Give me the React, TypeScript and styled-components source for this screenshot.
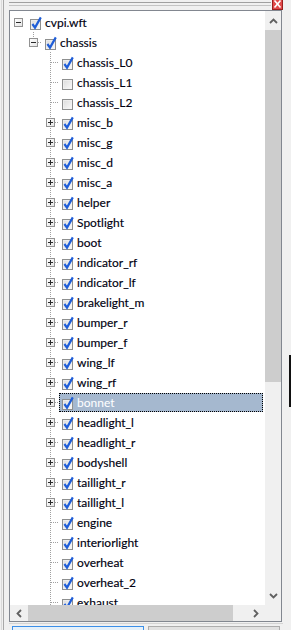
import React from "react";
import styled, { createGlobalStyle, css } from "styled-components";

const GlobalStyle = createGlobalStyle`
  html, body {
    margin: 0;
    padding: 0;
    background: #f0f0f0;
  }
  body {
    font-family: Lato, "Liberation Sans", sans-serif;
  }
`;

type Level = 0 | 1 | 2;

type TreeNode = {
  label: string;
  level: Level;
  expander?: "plus" | "minus";
  checked: boolean;
  selected?: boolean;
};

const leaf = (label: string, checked = true): TreeNode => ({ label, level: 2, checked });
const branch = (label: string, selected = false): TreeNode => ({
  label,
  level: 2,
  expander: "plus",
  checked: true,
  selected,
});

const nodes: TreeNode[] = [
  { label: "cvpi.wft", level: 0, expander: "minus", checked: true },
  { label: "chassis", level: 1, expander: "minus", checked: true },
  leaf("chassis_L0"),
  leaf("chassis_L1", false),
  leaf("chassis_L2", false),
  branch("misc_b"),
  branch("misc_g"),
  branch("misc_d"),
  branch("misc_a"),
  branch("helper"),
  branch("Spotlight"),
  branch("boot"),
  branch("indicator_rf"),
  branch("indicator_lf"),
  branch("brakelight_m"),
  branch("bumper_r"),
  branch("bumper_f"),
  branch("wing_lf"),
  branch("wing_rf"),
  branch("bonnet", true),
  branch("headlight_l"),
  branch("headlight_r"),
  branch("bodyshell"),
  branch("taillight_r"),
  branch("taillight_l"),
  leaf("engine"),
  leaf("interiorlight"),
  leaf("overheat"),
  leaf("overheat_2"),
  leaf("exhaust"),
];

const indents: Record<Level, number> = { 0: 0, 1: 15, 2: 32 };

const dotsV = "repeating-linear-gradient(to bottom, #a0a0a0 0 1px, transparent 1px 2px)";
const dotsH = "repeating-linear-gradient(to right, #a0a0a0 0 1px, transparent 1px 2px)";

const Frame = styled.div`
  width: 291px;
  height: 630px;
  overflow: hidden;
  display: flex;
  flex-direction: column;
  background: linear-gradient(
    to right,
    #f0f0f0 0 1px,
    #dadada 1px 2px,
    #f0f0f0 2px 3px,
    #a8a8a8 3px 4px,
    #f0f0f0 4px
  );
`;

const TitleStrip = styled.div`
  height: 10px;
  flex: none;
  display: flex;
  padding-left: 9px;
`;

const Rules = styled.div`
  width: 262px;
  height: 10px;
  background: linear-gradient(
    to bottom,
    transparent 0 2px,
    #a0a0a0 2px 3px,
    transparent 3px 5px,
    #c4c4c4 5px 6px,
    transparent 6px
  );
`;

const CloseBox = styled.div`
  margin-left: 1px;
  width: 11px;
  height: 10px;
  display: flex;
`;

const Body = styled.div`
  height: 612px;
  flex: none;
  display: flex;
  padding-left: 9px;
`;

const Panel = styled.div`
  width: 271px;
  height: 610px;
  border: 1px solid #828790;
  background: #ffffff;
  display: grid;
  grid-template-columns: 255px 16px;
  grid-template-rows: 594px 16px;
`;

const Edge = styled.div`
  margin-left: auto;
  width: 2px;
  display: flex;
  flex-direction: column;
`;

const EdgeMark = styled.div`
  margin-top: 345px;
  height: 52px;
  background: #111;
`;

const TreeArea = styled.div`
  overflow: hidden;
  padding-top: 1px;
  background: #fff;
`;

const Row = styled.div<{ $level: Level }>`
  height: 20px;
  display: flex;
  align-items: center;
  padding-left: ${({ $level }) => indents[$level]}px;
`;

const Joint = styled.div<{ $level: Level }>`
  position: relative;
  flex: none;
  width: 17px;
  height: 20px;
  display: flex;
  align-items: center;
  justify-content: center;

  ${({ $level }) =>
    $level > 0 &&
    css`
      &::before {
        content: "";
        position: absolute;
        left: 8px;
        top: 0;
        width: 1px;
        height: ${$level === 2 ? 20 : 10}px;
        background: ${dotsV};
      }
      &::after {
        content: "";
        position: absolute;
        left: 9px;
        top: 10px;
        width: 8px;
        height: 1px;
        background: ${dotsH};
      }
    `}
`;

const ExpanderBox = styled.svg`
  position: relative;
  z-index: 1;
  display: block;
  margin-top: 1px;
`;

const Item = styled.div<{ $selected?: boolean }>`
  flex: 1;
  min-width: 0;
  height: 19px;
  margin-top: 1px;
  margin-right: 2px;
  box-sizing: border-box;
  display: flex;
  align-items: center;
  border: 1px dotted transparent;
  ${({ $selected }) =>
    $selected &&
    css`
      background: #a5b8cf;
      border-color: #000;
    `}
`;

const CheckIcon = styled.svg`
  flex: none;
  display: block;
`;

const Label = styled.span<{ $selected?: boolean }>`
  margin-left: 3px;
  font-size: 12px;
  line-height: 16px;
  white-space: nowrap;
  color: ${({ $selected }) => ($selected ? "#ffffff" : "#000010")};
  -webkit-text-stroke: ${({ $selected }) => ($selected ? "0" : "0.15px #000010")};
`;

const VScroll = styled.div`
  background: #f0f0f0;
  display: flex;
  flex-direction: column;
`;

const HScroll = styled.div`
  background: #f0f0f0;
  display: flex;
`;

const Corner = styled.div`
  background: #f0f0f0;
`;

const ArrowButton = styled.div<{ $vertical?: boolean }>`
  flex: none;
  display: flex;
  align-items: center;
  justify-content: center;
  ${({ $vertical }) => ($vertical ? "height: 19px;" : "width: 18px;")}
`;

const Thumb = styled.div<{ $vertical?: boolean }>`
  flex: none;
  background: #cdcdcd;
  ${({ $vertical }) => ($vertical ? "height: 352px;" : "width: 205px;")}
`;

const Track = styled.div`
  flex: 1;
`;

const Footer = styled.div`
  flex: 1;
  display: flex;
  flex-direction: column;
  padding-left: 9px;
`;

const FooterRule = styled.div`
  margin-top: 1px;
  width: 274px;
  height: 1px;
  background: #d4d4d4;
`;

const ButtonRow = styled.div`
  margin-top: 2px;
  display: flex;
  gap: 4px;
  padding-left: 3px;
`;

const FakeButton = styled.div<{ $focused?: boolean }>`
  width: 132px;
  height: 12px;
  box-sizing: border-box;
  border: 1px solid ${({ $focused }) => ($focused ? "#3c8fe8" : "#adadad")};
  background: ${({ $focused }) => ($focused ? "#e5f1fb" : "#e1e1e1")};
`;

const Chevron = ({ dir }: { dir: "up" | "down" | "left" | "right" }) => {
  const vertical = dir === "up" || dir === "down";
  const w = vertical ? 9 : 6;
  const h = vertical ? 6 : 9;
  const points = {
    up: "1,5 4.5,1.5 8,5",
    down: "1,1 4.5,4.5 8,1",
    left: "5,1 1.5,4.5 5,8",
    right: "1,1 4.5,4.5 1,8",
  }[dir];
  return (
    <svg width={w} height={h} viewBox={`0 0 ${w} ${h}`}>
      <polyline points={points} fill="none" stroke="#606060" strokeWidth="1.8" />
    </svg>
  );
};

const Expander = ({ kind }: { kind: "plus" | "minus" }) => (
  <ExpanderBox width="9" height="9" viewBox="0 0 9 9">
    <defs>
      <linearGradient id="expg" x1="0" y1="0" x2="1" y2="1">
        <stop offset="0" stopColor="#ffffff" />
        <stop offset="1" stopColor="#e4e4e4" />
      </linearGradient>
    </defs>
    <rect x="0.5" y="0.5" width="8" height="8" fill="url(#expg)" stroke="#929292" />
    <line x1="2" y1="4.5" x2="7" y2="4.5" stroke="#2a2a2a" />
    {kind === "plus" && <line x1="4.5" y1="2" x2="4.5" y2="7" stroke="#2a2a2a" />}
  </ExpanderBox>
);

const CheckBox = ({ checked }: { checked: boolean }) => (
  <CheckIcon width="14" height="14" viewBox="0 0 14 14">
    <defs>
      <linearGradient id="cbg" x1="0" y1="0" x2="1" y2="1">
        <stop offset="0" stopColor="#d9d9d9" />
        <stop offset="1" stopColor="#fbfbfb" />
      </linearGradient>
    </defs>
    <rect x="2.5" y="3.5" width="10" height="10" fill="url(#cbg)" stroke="#8e8f8f" />
    <rect x="3.5" y="4.5" width="8" height="8" fill="none" stroke="#f4f4f4" strokeOpacity="0.6" />
    {checked && (
      <path
        d="M4.4 8 L7 11.6 L12.8 1.4"
        fill="none"
        stroke="#1f5ed8"
        strokeWidth="2.2"
        strokeLinejoin="miter"
      />
    )}
  </CheckIcon>
);

const CloseGlyph = () => (
  <svg width="11" height="10" viewBox="0 0 11 10">
    <rect x="0.5" y="-1.5" width="10" height="11" fill="#e04848" stroke="#9a1e1e" />
    <path d="M2.5 0.5 L8.5 7.5 M8.5 0.5 L2.5 7.5" stroke="#ffffff" strokeWidth="1.6" />
  </svg>
);

const TreeRow = ({ node }: { node: TreeNode }) => (
  <Row $level={node.level}>
    <Joint $level={node.level}>{node.expander && <Expander kind={node.expander} />}</Joint>
    <Item $selected={node.selected}>
      <CheckBox checked={node.checked} />
      <Label $selected={node.selected}>{node.label}</Label>
    </Item>
  </Row>
);

export default function App() {
  return (
    <>
      <GlobalStyle />
      <Frame>
        <TitleStrip>
          <Rules />
          <CloseBox>
            <CloseGlyph />
          </CloseBox>
        </TitleStrip>
        <Body>
          <Panel>
            <TreeArea>
              {nodes.map((n) => (
                <TreeRow key={n.label} node={n} />
              ))}
            </TreeArea>
            <VScroll>
              <ArrowButton $vertical>
                <Chevron dir="up" />
              </ArrowButton>
              <Thumb $vertical />
              <Track />
              <ArrowButton $vertical>
                <Chevron dir="down" />
              </ArrowButton>
            </VScroll>
            <HScroll>
              <ArrowButton>
                <Chevron dir="left" />
              </ArrowButton>
              <Thumb />
              <Track />
              <ArrowButton>
                <Chevron dir="right" />
              </ArrowButton>
            </HScroll>
            <Corner />
          </Panel>
          <Edge>
            <EdgeMark />
          </Edge>
        </Body>
        <Footer>
          <FooterRule />
          <ButtonRow>
            <FakeButton $focused />
            <FakeButton />
          </ButtonRow>
        </Footer>
      </Frame>
    </>
  );
}
